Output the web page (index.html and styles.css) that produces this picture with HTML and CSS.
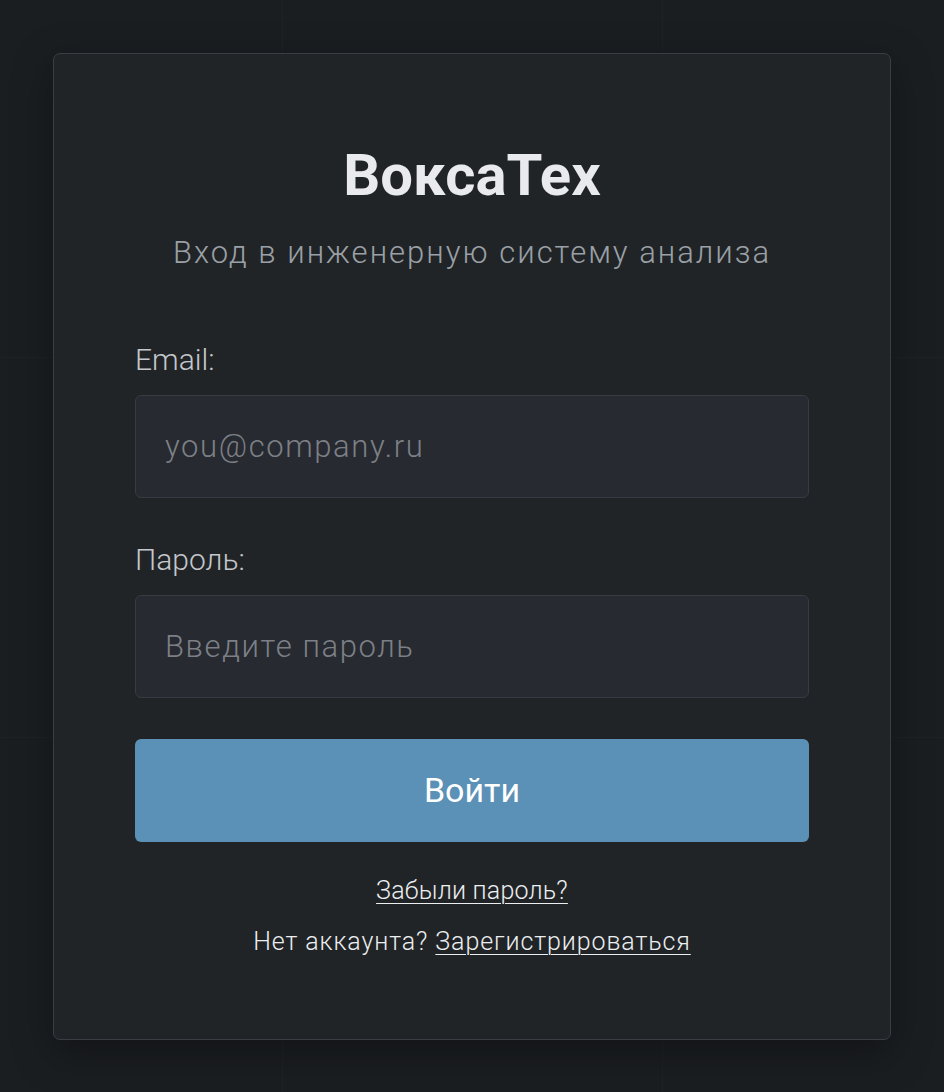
FILE: index.html
```html
<!DOCTYPE html>
<html lang="ru">
<head>
<meta charset="utf-8">
<title>ВоксаТех — Вход</title>
<link rel="stylesheet" href="styles.css">
</head>
<body>
<main class="page">
  <section class="card">
    <h1 class="title">ВоксаТех</h1>
    <p class="subtitle">Вход в инженерную систему анализа</p>
    <form class="form">
      <label class="label" for="email">Email:</label>
      <input class="input" id="email" type="email" placeholder="you@company.ru">
      <label class="label label-second" for="password">Пароль:</label>
      <input class="input" id="password" type="password" placeholder="Введите пароль">
      <button class="btn" type="button">Войти</button>
    </form>
    <p class="link-row first"><a href="#" class="link">Забыли пароль?</a></p>
    <p class="link-row">Нет аккаунта? <a href="#" class="link">Зарегистрироваться</a></p>
  </section>
</main>
</body>
</html>
```

FILE: styles.css
```css
* { box-sizing: border-box; }
html, body { margin: 0; padding: 0; }
body {
  background-color: #1b1e21;
  background-image:
    linear-gradient(rgba(255,255,255,0.016) 1px, transparent 1px),
    linear-gradient(90deg, rgba(255,255,255,0.016) 1px, transparent 1px);
  background-size: 380px 380px;
  background-position: 282px -23px;
  font-family: Roboto, "Noto Sans", sans-serif;
  color: #e8eaed;
}
.page {
  min-height: 100vh;
  display: flex;
  align-items: center;
  justify-content: center;
}
.card {
  width: 838px;
  background: #212427;
  border: 1px solid #3a3e44;
  border-radius: 7px;
  box-shadow: 0 12px 40px rgba(0,0,0,0.35);
  padding: 81px 81px 79px;
  text-align: center;
}
.title {
  margin: 0;
  font-size: 58px;
  line-height: 80px;
  font-weight: 700;
  color: #e8eaed;
  letter-spacing: 0;
}
.subtitle {
  margin: 18px 0 0;
  font-size: 31px;
  line-height: 40px;
  font-weight: 300;
  color: #9aa0a6;
  letter-spacing: 2px;
}
.form {
  margin-top: 67px;
  display: flex;
  flex-direction: column;
  text-align: left;
}
.label {
  font-size: 30px;
  line-height: 40px;
  font-weight: 300;
  color: #c4c7cb;
  margin-bottom: 15px;
}
.label-second { margin-top: 42px; }
.input {
  height: 103px;
  width: 100%;
  background: #272a30;
  border: 1px solid #373b42;
  border-radius: 6px;
  padding: 0 29px;
  font-family: inherit;
  font-size: 31px;
  font-weight: 300;
  color: #e8eaed;
  letter-spacing: 1.6px;
  outline: none;
}
.input::placeholder { color: #7c8086; }
.btn {
  margin-top: 41px;
  height: 103px;
  width: 100%;
  background: #5b91b6;
  border: none;
  border-radius: 6px;
  color: #ffffff;
  font-family: inherit;
  font-size: 34px;
  font-weight: 400;
  cursor: pointer;
}
.link-row {
  margin: 15px 0 0;
  font-size: 25px;
  line-height: 36px;
  font-weight: 300;
  color: #eceef0;
  letter-spacing: 0.9px;
}
.link-row.first { margin-top: 31px; letter-spacing: 0.2px; }
.link {
  color: #eceef0;
  text-decoration: underline;
  text-underline-offset: 4px;
  text-decoration-thickness: 1px;
}
```
